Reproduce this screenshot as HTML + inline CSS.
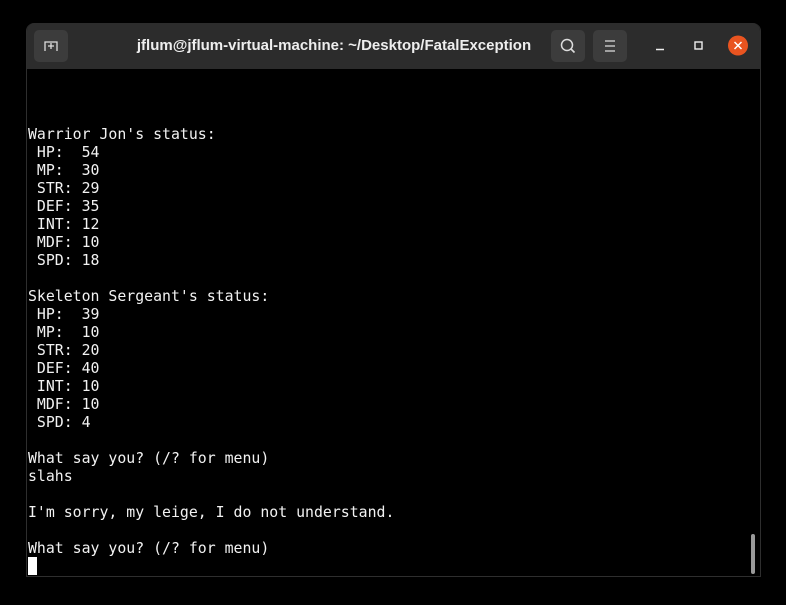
<!DOCTYPE html>
<html><head><style>
html,body{margin:0;padding:0;background:#000;width:786px;height:605px;overflow:hidden}
.win{position:absolute;left:26px;top:23px;width:733px;height:553px;background:#000;border:1px solid #2e2e2e;border-top:none;border-radius:8px 8px 0 0;overflow:hidden}
.tb{position:absolute;left:0;top:0;width:100%;height:46px;background:#2c2c2c}
.title{position:absolute;left:0;width:614px;top:0;height:46px;text-align:center;color:#eee;font:bold 15px/46px "Liberation Sans",sans-serif;white-space:nowrap}
.btn{position:absolute;top:7px;width:34px;height:32px;background:#3c3c3c;border-radius:5px}
pre{position:absolute;left:1px;top:48px;margin:0;font:14.85px/18px "DejaVu Sans Mono",monospace;color:#f2f2f2}
.cur{position:absolute;left:1px;top:534px;width:9px;height:18px;background:#fff}
.sb{position:absolute;left:724px;top:511px;width:4px;height:40px;background:#999;border-radius:2px}
</style></head><body>
<div class="win">
<div class="tb">
<div class="btn" style="left:7px"><svg width="34" height="32"><path d="M11 21V12h12v9M17 13v6M14 16h6" stroke="#ddd" stroke-width="1.3" fill="none"/></svg></div>
<div class="title">jflum@jflum-virtual-machine: ~/Desktop/FatalException</div>
<div class="btn" style="left:524px"><svg width="34" height="32"><circle cx="16" cy="15" r="5.5" stroke="#ddd" stroke-width="1.5" fill="none"/><path d="M20 19l3.5 3.5" stroke="#ddd" stroke-width="1.6"/></svg></div>
<div class="btn" style="left:566px"><svg width="34" height="32"><path d="M12 11h10M12 16h10M12 21h10" stroke="#ddd" stroke-width="1.3"/></svg></div>
<svg style="position:absolute;left:620px;top:12px" width="110" height="24"><path d="M9 14.5h8" stroke="#eee" stroke-width="1.5"/><rect x="48" y="7" width="7" height="7" stroke="#eee" stroke-width="1.4" fill="none"/><circle cx="91" cy="10.5" r="10" fill="#e95420"/><path d="M87.5 7l7 7M94.5 7l-7 7" stroke="#fff" stroke-width="1.5"/></svg>
</div>
<pre>



Warrior Jon's status:
 HP:  54
 MP:  30
 STR: 29
 DEF: 35
 INT: 12
 MDF: 10
 SPD: 18

Skeleton Sergeant's status:
 HP:  39
 MP:  10
 STR: 20
 DEF: 40
 INT: 10
 MDF: 10
 SPD: 4

What say you? (/? for menu)
slahs

I'm sorry, my leige, I do not understand.

What say you? (/? for menu)</pre>
<div class="cur"></div>
<div class="sb"></div>
</div>
</body></html>
